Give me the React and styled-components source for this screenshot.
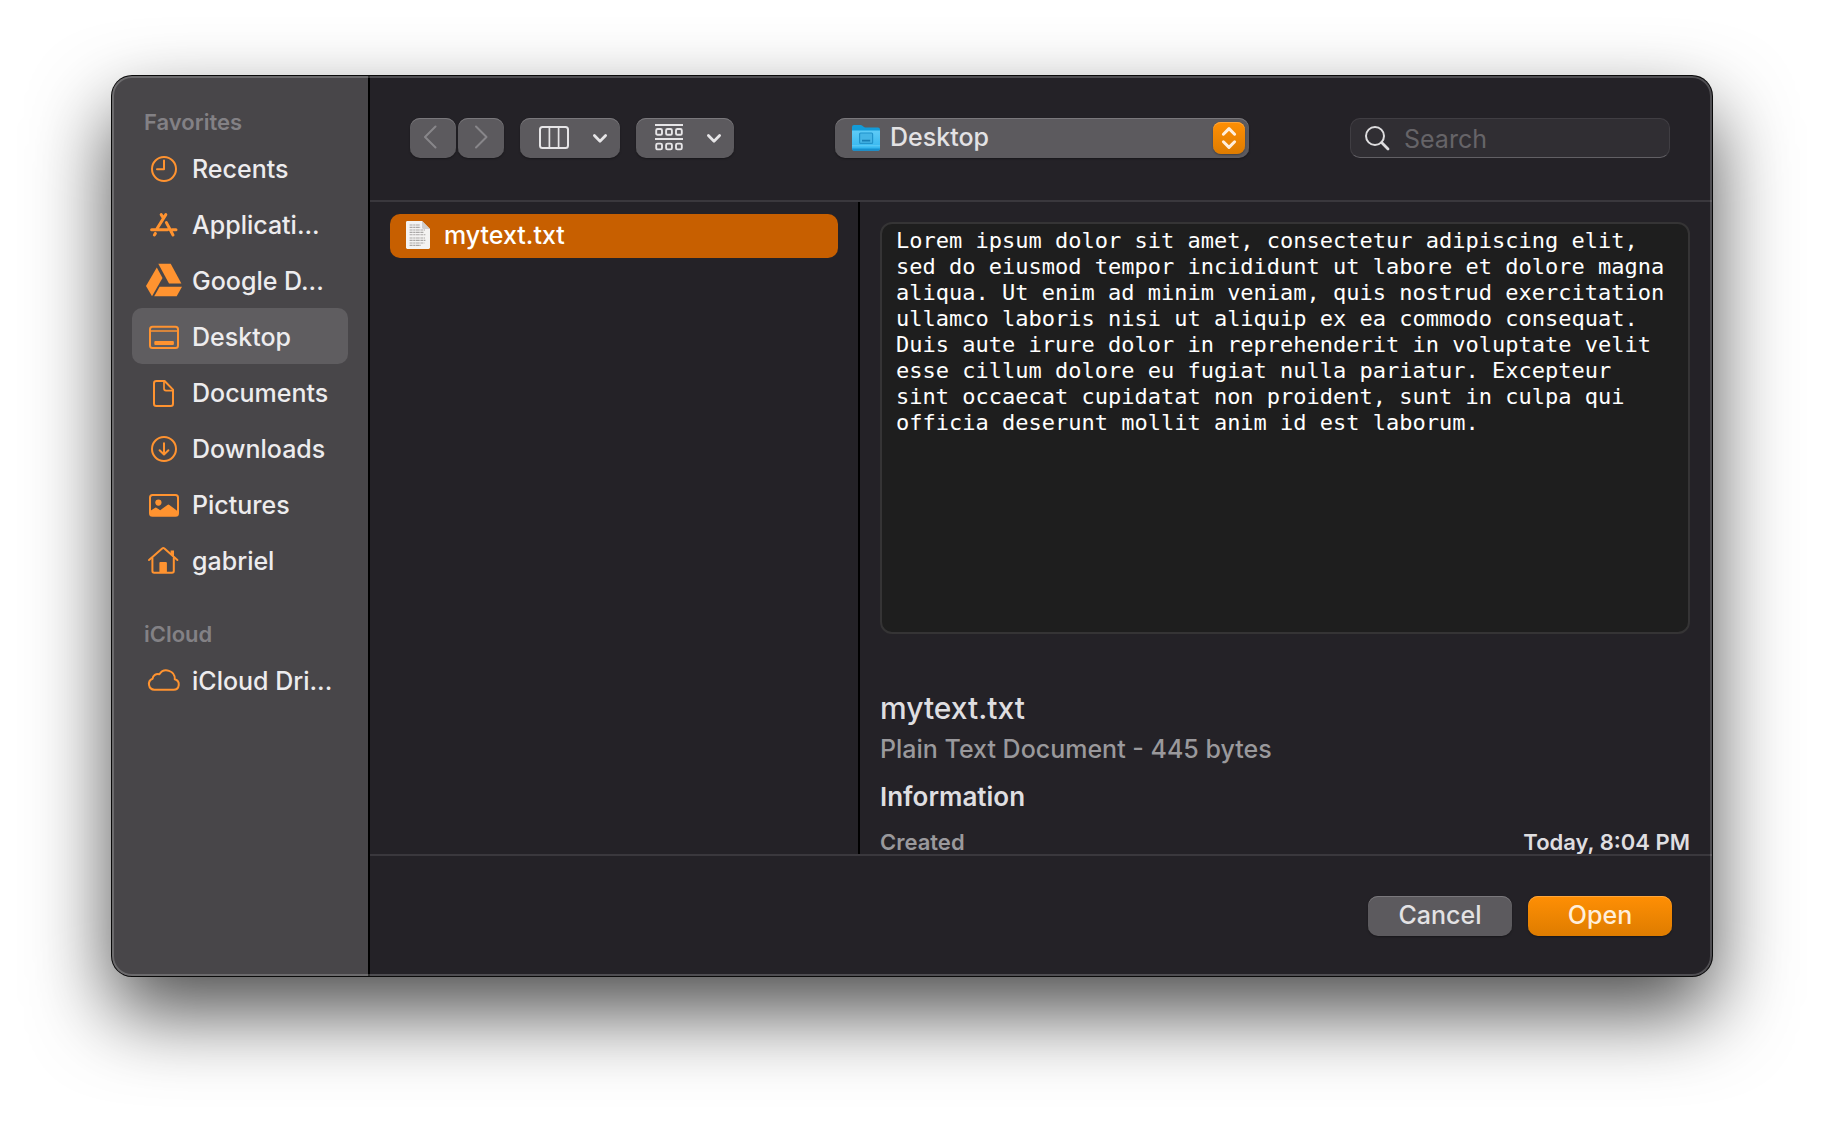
import styled, { createGlobalStyle, css } from "styled-components";

const LOREM =
  "Lorem ipsum dolor sit amet, consectetur adipiscing elit, sed do eiusmod tempor incididunt ut labore et dolore magna aliqua. Ut enim ad minim veniam, quis nostrud exercitation ullamco laboris nisi ut aliquip ex ea commodo consequat. Duis aute irure dolor in reprehenderit in voluptate velit esse cillum dolore eu fugiat nulla pariatur. Excepteur sint occaecat cupidatat non proident, sunt in culpa qui officia deserunt mollit anim id est laborum.";

const ClockIcon = () => (
  <SideIcon>
    <circle cx="18" cy="19" r="12" />
    <path d="M18 10.5V19.3H11" />
  </SideIcon>
);

const AppsIcon = () => (
  <SideIcon>
    <g strokeWidth="3">
      <path d="M19.8 8.6L10.8 23M15.2 8.6L17.2 11.8M5.6 23.8H21.5M20.4 16.6L27 29M26 23.8H30M9.4 27.4L8.4 29" />
    </g>
  </SideIcon>
);

const DriveIcon = () => (
  <SideIcon>
    <g fill="#ff9330" stroke="none">
      <path d="M12.3 1.7H24.7L35.4 21.4H23Z" />
      <path d="M10.8 5.4L16.5 16L6 34.2L0 24Z" />
      <path d="M13.6 24.7H36L30.7 34.3H8.2Z" />
    </g>
  </SideIcon>
);

const DesktopIcon = () => (
  <SideIcon>
    <rect x="4" y="8.7" width="28" height="21.3" rx="2.5" />
    <path d="M4 13H32" strokeWidth="1.6" />
    <rect x="8.3" y="23" width="19.6" height="4" rx="1" fill="#ff9330" stroke="none" />
  </SideIcon>
);

const DocumentIcon = () => (
  <SideIcon>
    <path d="M10.5 7H18.6L27 15.6V29.8Q27 32 24.8 32H10.2Q8 32 8 29.8V9.2Q8 7 10.5 7Z" />
    <path d="M18 7.5V14.6Q18 16.6 20 16.6H26.5" strokeWidth="1.7" />
  </SideIcon>
);

const DownloadIcon = () => (
  <SideIcon>
    <circle cx="18" cy="19" r="12" />
    <path d="M18 13.3V24M13.6 20.2L18 24.5L22.4 20.2" />
  </SideIcon>
);

const PictureIcon = () => (
  <SideIcon>
    <rect x="4" y="9" width="28" height="20.7" rx="2.5" />
    <circle cx="12.4" cy="16.6" r="3.1" fill="#ff9330" stroke="none" />
    <path
      d="M4 25L9.2 21.8Q10 21.4 10.8 21.9L14.2 24.2L21.4 18.9Q22.4 18.2 23.4 18.9L32 25.4V28.6Q32 29.8 30.6 29.8H5.4Q4 29.8 4 28.6Z"
      fill="#ff9330"
      stroke="none"
    />
  </SideIcon>
);

const HomeIcon = () => (
  <SideIcon>
    <path d="M3 18L16.2 6.5Q17.3 5.6 18.4 6.5L31.4 18" />
    <path d="M6.4 16V29Q6.4 30.8 8.2 30.8H26Q27.8 30.8 27.8 29V16" />
    <path d="M24.6 8.4H28V14.5L24.6 11.6Z" fill="#ff9330" stroke="none" />
    <path d="M13.4 31V21Q13.4 20 14.4 20H19.9Q20.9 20 20.9 21V31Z" fill="#ff9330" stroke="none" />
  </SideIcon>
);

const CloudIcon = () => (
  <SideIcon>
    <path d="M8.4 27.8A5.7 5.7 0 0 1 6.6 16.8A5.2 5.2 0 0 1 13.4 12.2A8.4 8.4 0 0 1 28.8 17.2A5.4 5.4 0 0 1 27.6 27.8Z" />
  </SideIcon>
);

const FAVORITES = [
  { label: "Recents", Icon: ClockIcon },
  { label: "Applicati...", Icon: AppsIcon },
  { label: "Google D...", Icon: DriveIcon },
  { label: "Desktop", Icon: DesktopIcon, active: true },
  { label: "Documents", Icon: DocumentIcon },
  { label: "Downloads", Icon: DownloadIcon },
  { label: "Pictures", Icon: PictureIcon },
  { label: "gabriel", Icon: HomeIcon },
];

const ICLOUD = [{ label: "iCloud Dri...", Icon: CloudIcon }];

const ChevronDown = () => (
  <svg width="16" height="12" viewBox="0 0 16 12" fill="none">
    <path
      d="M2.4 3.6L8 9.2L13.6 3.6"
      stroke="#e6e5e7"
      strokeWidth="2.8"
      strokeLinecap="round"
      strokeLinejoin="round"
    />
  </svg>
);

const ColumnsIcon = () => (
  <svg width="32" height="24" viewBox="0 0 32 24" fill="none" stroke="#e6e5e7">
    <rect x="2" y="1" width="28" height="21" rx="2.5" strokeWidth="2" />
    <path d="M11.4 1V22M20.6 1V22" strokeWidth="1.7" />
  </svg>
);

const GroupIcon = () => (
  <svg width="30" height="28" viewBox="-1 1 30 28" fill="none" stroke="#e6e5e7" strokeWidth="1.9">
    <path d="M0 2H28M0 16H28" />
    {[6, 20.6].map((y) =>
      [1.2, 11.1, 21].map((x) => (
        <rect key={`${x}-${y}`} x={x} y={y} width="5.8" height="5.8" rx="1.4" />
      ))
    )}
  </svg>
);

const FolderIcon = () => (
  <svg width="30" height="28" viewBox="0 0 30 28">
    <defs>
      <linearGradient id="folderFront" x1="0" y1="0" x2="0" y2="1">
        <stop offset="0" stopColor="#5fcbf6" />
        <stop offset="1" stopColor="#30b4ee" />
      </linearGradient>
    </defs>
    <path
      d="M1 3Q1 1 3 1H9.5Q10.6 1 11.4 1.8L12.6 2.8Q13.4 3.6 14.6 3.6H27Q29 3.6 29 5.6V12H1Z"
      fill="#139bd8"
    />
    <path d="M1 6.6H29V24.8Q29 26.6 27.2 26.6H2.8Q1 26.6 1 24.8Z" fill="url(#folderFront)" />
    <path d="M1 21.8H29" stroke="#62cdf7" strokeWidth="1" />
    <path d="M1 24.6V25Q1 26.8 2.8 26.8H27.2Q29 26.8 29 25V24.6Z" fill="#1590cf" />
    <rect x="8.6" y="9" width="13" height="10.4" rx="1" fill="#45b5e6" stroke="#2193cb" strokeWidth="1.2" />
    <path d="M11 16.6H19.2" stroke="#187fb5" strokeWidth="1.6" />
  </svg>
);

const FileIcon = () => (
  <svg width="26" height="30" viewBox="0 0 26 30" fill="none">
    <path d="M2.4 1H17L25 9V27.6Q25 29 23.6 29H2.4Q1 29 1 27.6V2.4Q1 1 2.4 1Z" fill="#f4f3f2" />
    <path d="M17 1L25 9H18.4Q17 9 17 7.6Z" fill="#cfcdcb" />
    <path
      d="M4.6 5H15M4.6 7.4H15.6M4.6 10H20M4.6 12.4H19M4.6 14.8H20.4M4.6 18H20M4.6 20.4H20.4M4.6 23H19.4M4.6 25.4H16"
      stroke="#a9a7a6"
      strokeWidth="1.1"
      strokeDasharray="3 .6 2 .5 4 .7"
    />
  </svg>
);

const SearchIcon = () => (
  <svg width="26" height="26" viewBox="0 0 26 26" fill="none" stroke="#dddcde" strokeLinecap="round">
    <circle cx="11" cy="11" r="9" strokeWidth="2" />
    <path d="M17.6 17.6L24 24" strokeWidth="2.8" />
  </svg>
);

const SidebarSection = ({ title, items }) => (
  <Section>
    <SectionTitle>{title}</SectionTitle>
    {items.map(({ label, Icon, active }) => (
      <SidebarItem key={label} href="#" $active={active}>
        <Icon />
        {label}
      </SidebarItem>
    ))}
  </Section>
);

const App = () => {
  return (
    <>
      <GlobalStyle />
      <Page>
        <Dialog role="dialog" aria-label="Open file">
          <Sidebar>
            <SidebarSection title="Favorites" items={FAVORITES} />
            <SidebarSection title="iCloud" items={ICLOUD} />
          </Sidebar>
          <Main>
            <Toolbar>
              <ToolGroup>
                <HistoryButtons>
                  <NavButton aria-label="Back" disabled>
                    <svg width="18" height="24" viewBox="0 0 18 24">
                      <path d="M11.5 1.5L1 12L11.5 22.5" />
                    </svg>
                  </NavButton>
                  <NavButton aria-label="Forward" disabled>
                    <svg width="18" height="24" viewBox="0 0 18 24">
                      <path d="M4 1.5L14.5 12L4 22.5" />
                    </svg>
                  </NavButton>
                </HistoryButtons>
                <ViewButton aria-label="Column view">
                  <ColumnsIcon />
                  <ChevronDown />
                </ViewButton>
                <ViewButton aria-label="Group items">
                  <GroupIcon />
                  <ChevronDown />
                </ViewButton>
              </ToolGroup>
              <LocationPicker>
                <FolderIcon />
                <LocationSelect aria-label="Location" defaultValue="Desktop">
                  <option>Desktop</option>
                </LocationSelect>
                <Stepper>
                  <svg width="16" height="24" viewBox="0 0 16 24">
                    <path d="M2.4 8.2L8 2.6L13.6 8.2M2.4 15.8L8 21.4L13.6 15.8" />
                  </svg>
                </Stepper>
              </LocationPicker>
              <SearchBox>
                <SearchIcon />
                <SearchInput type="text" placeholder="Search" aria-label="Search" />
              </SearchBox>
            </Toolbar>
            <Browser>
              <FileColumn>
                <FileRow>
                  <FileIcon />
                  mytext.txt
                </FileRow>
              </FileColumn>
              <Details>
                <Preview>{LOREM}</Preview>
                <FileName>mytext.txt</FileName>
                <FileKind>Plain Text Document - 445 bytes</FileKind>
                <InfoTitle>Information</InfoTitle>
                <InfoList>
                  <dt>Created</dt>
                  <dd>Today, 8:04 PM</dd>
                </InfoList>
              </Details>
            </Browser>
            <Footer>
              <ActionButton>Cancel</ActionButton>
              <ActionButton $primary>Open</ActionButton>
            </Footer>
          </Main>
        </Dialog>
      </Page>
    </>
  );
};
export default App;

//==============================styled-components

const GlobalStyle = createGlobalStyle`
  * {
    box-sizing: border-box;
  }

  body {
    margin: 0;
    background-color: white;
    font-family: Inter, "Liberation Sans", sans-serif;
    -webkit-font-smoothing: antialiased;
  }

  button, input, select {
    font-family: inherit;
  }
`;

const raised = css`
  border: none;
  border-radius: 10px;
  background-color: #5c5a5e;
  box-shadow: inset 0 1px 0 #7a787c, 0 1px 2px rgba(0, 0, 0, 0.35);
`;

const Page = styled.div`
  height: 100vh;
  padding: 76px 112px 148px;
  overflow: hidden;
`;

const Dialog = styled.div`
  position: relative;
  display: flex;
  height: 100%;
  border-radius: 20px;
  background-color: #242227;
  overflow: hidden;
  box-shadow: 0 0 0 1px #0a0a0a, 0 36px 80px rgba(0, 0, 0, 0.7);

  /* light rim drawn over the sidebar and the main area */
  &::after {
    content: "";
    position: absolute;
    inset: 0;
    border: 2px solid rgba(255, 255, 255, 0.2);
    border-radius: 20px;
    pointer-events: none;
  }
`;

const Sidebar = styled.nav`
  display: flex;
  flex-direction: column;
  gap: 28px;
  flex: 0 0 258px;
  padding: 28px 20px;
  border-right: 2px solid black;
  background-color: #484649;
`;

const Section = styled.div`
  display: flex;
  flex-direction: column;
`;

const SectionTitle = styled.div`
  padding: 0 12px;
  font-size: 22px;
  font-weight: 600;
  line-height: 36px;
  color: #838185;
`;

const SidebarItem = styled.a`
  display: flex;
  align-items: center;
  gap: 10px;
  height: 56px;
  padding: 2px 14px 0;
  border-radius: 10px;
  background-color: ${({ $active }) => ($active ? "#5f5d60" : "transparent")};
  color: #edecee;
  font-size: 25px;
  font-weight: 500;
  white-space: nowrap;
  text-decoration: none;
`;

const SideIcon = styled.svg.attrs({ viewBox: "0 1 36 36" })`
  flex: none;
  width: 36px;
  height: 36px;
  fill: none;
  stroke: #ff9330;
  stroke-width: 2;
  stroke-linecap: round;
  stroke-linejoin: round;
`;

const Main = styled.main`
  display: flex;
  flex-direction: column;
  flex: 1;
  min-width: 0;
`;

const Toolbar = styled.div`
  display: flex;
  align-items: center;
  gap: 101px;
  flex: 0 0 126px;
  padding: 0 42px 0 40px;
  border-bottom: 2px solid #3a383d;
`;

const ToolGroup = styled.div`
  display: flex;
  gap: 16px;
`;

const HistoryButtons = styled.div`
  display: flex;
  gap: 2px;
`;

const NavButton = styled.button`
  ${raised}
  display: flex;
  align-items: center;
  justify-content: center;
  width: 46px;
  height: 40px;
  padding: 0 0 2px;

  path {
    fill: none;
    stroke: #88868a;
    stroke-width: 2;
    stroke-linecap: round;
    stroke-linejoin: round;
  }
`;

const ViewButton = styled.button`
  ${raised}
  display: flex;
  align-items: center;
  gap: 22px;
  height: 40px;
  padding: 0 12px 0 18px;
`;

const LocationPicker = styled.div`
  ${raised}
  display: flex;
  align-items: center;
  gap: 9px;
  flex: 1;
  height: 40px;
  padding: 0 4px 0 16px;
`;

const LocationSelect = styled.select`
  flex: 1;
  min-width: 0;
  height: 40px;
  padding: 0 0 2px;
  border: none;
  background: transparent;
  color: #e3e2e4;
  font-size: 25px;
  font-weight: 500;
  appearance: none;
  outline: none;
`;

const Stepper = styled.span`
  display: flex;
  align-items: center;
  justify-content: center;
  width: 32px;
  height: 32px;
  border-radius: 8px;
  background: linear-gradient(#ff8f04, #de7c00);
  box-shadow: inset 0 1px 0 #ffa63a, 0 1px 2px rgba(0, 0, 0, 0.3);
  pointer-events: none;

  path {
    fill: none;
    stroke: #ffeedb;
    stroke-width: 3;
    stroke-linecap: round;
    stroke-linejoin: round;
  }
`;

const SearchBox = styled.label`
  display: flex;
  align-items: center;
  gap: 14px;
  flex: 0 0 320px;
  min-width: 0;
  height: 40px;
  padding: 0 13px;
  border: 1px solid #403e43;
  border-bottom-color: #626065;
  border-radius: 10px;
  background-color: #302e33;
`;

const SearchInput = styled.input`
  flex: 1;
  min-width: 0;
  padding: 2px 0 0;
  border: none;
  background: transparent;
  color: #e3e2e4;
  font-size: 25px;
  outline: none;

  &::placeholder {
    color: #666468;
    opacity: 1;
  }
`;

const Browser = styled.div`
  display: flex;
  flex: 1;
  min-height: 0;
`;

const FileColumn = styled.div`
  flex: 0 0 490px;
  padding: 12px 20px;
  border-right: 2px solid black;
`;

const FileRow = styled.button`
  display: flex;
  align-items: center;
  gap: 13px;
  width: 100%;
  height: 44px;
  padding: 0 15px 2px;
  border: none;
  border-radius: 10px;
  background-color: #c75f00;
  color: white;
  font-size: 25px;
  font-weight: 500;
`;

const Details = styled.div`
  flex: 1;
  min-width: 0;
  padding: 20px 22px 0 20px;
  overflow: hidden;
`;

const Preview = styled.div`
  height: 412px;
  padding: 4px 14px;
  border: 2px solid #353435;
  border-radius: 12px;
  background-color: #1e1e1e;
  color: white;
  font-family: "DejaVu Sans Mono", monospace;
  font-size: 22px;
  line-height: 26px;
`;

const FileName = styled.h1`
  margin: 56px 0 0;
  color: #dfdee0;
  font-size: 30px;
  font-weight: 500;
  line-height: 36px;
`;

const FileKind = styled.div`
  color: #9a999c;
  font-size: 25px;
  font-weight: 500;
  line-height: 46px;
`;

const InfoTitle = styled.h2`
  margin: 0;
  color: #dfdee0;
  font-size: 26px;
  font-weight: 600;
  line-height: 50px;
`;

const InfoList = styled.dl`
  display: flex;
  justify-content: space-between;
  margin: 8px 0 0;
  color: #dfdee0;
  font-size: 22px;
  font-weight: 600;
  line-height: 24px;

  dt {
    color: #9a999c;
  }

  dd {
    margin: 0;
  }
`;

const Footer = styled.div`
  display: flex;
  align-items: center;
  justify-content: flex-end;
  gap: 16px;
  flex: 0 0 122px;
  padding: 0 40px;
  border-top: 2px solid #3a383d;
`;

const ActionButton = styled.button`
  ${raised}
  width: 144px;
  height: 40px;
  padding: 0 0 2px;
  color: #e3e2e4;
  font-size: 25px;
  font-weight: 500;

  ${({ $primary }) =>
    $primary &&
    css`
      background: linear-gradient(#ff8f04, #de7c00);
      box-shadow: inset 0 1px 0 #ffa63a, 0 1px 2px rgba(0, 0, 0, 0.35);
      color: #ffeedb;
    `}
`;
